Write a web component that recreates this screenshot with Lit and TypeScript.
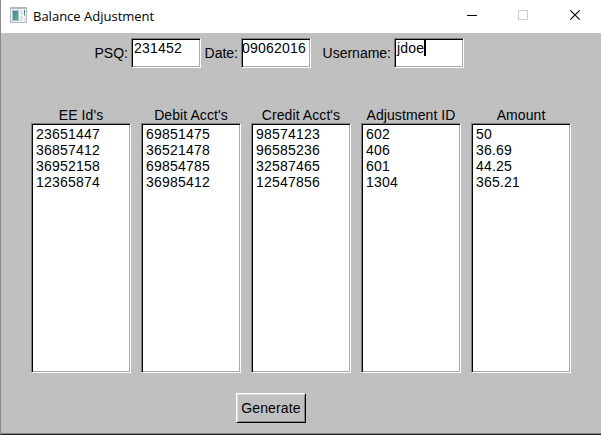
import { LitElement, html, css } from "lit";
import { customElement, property } from "lit/decorators.js";

@customElement("text-field")
class TextField extends LitElement {
  @property() label = "";
  @property() value = "";
  @property({ type: Boolean, reflect: true }) focused = false;
  @property({ type: Boolean, reflect: true }) tight = false;

  static styles = css`
    :host { display: flex; align-items: center; height: 30px; }
    .label { flex: 1; text-align: right; padding-right: 3px; white-space: nowrap; }
    .box {
      box-sizing: border-box; display: flex; width: 70px; height: 30px;
      border: 1px solid; border-color: #808080 #fff #fff #808080;
      box-shadow: inset 1px 1px #000, inset -1px -1px #a9a9a9;
      background: #fff; padding: 1px 0 0 2px; line-height: 16px;
      letter-spacing: .21px; white-space: nowrap;
    }
    :host([tight]) .box { padding-left: 0; }
    .caret { width: 2px; height: 16px; background: #000; }
  `;

  render() {
    return html`
      <span class="label">${this.label}</span>
      <div class="box"><span>${this.value}</span>${this.focused ? html`<i class="caret"></i>` : null}</div>
    `;
  }
}

@customElement("list-column")
class ListColumn extends LitElement {
  @property() heading = "";
  @property({ attribute: false }) items: string[] = [];

  static styles = css`
    :host { display: flex; flex-direction: column; width: 100px; }
    .heading { height: 16px; line-height: 16px; text-align: center; white-space: nowrap; letter-spacing: .08px; }
    .list {
      box-sizing: border-box; height: 250px;
      border: 1px solid; border-color: #808080 #fff #fff #808080;
      box-shadow: inset 1px 1px #000, inset -1px -1px #a9a9a9;
      background: #fff; padding: 2px 4px; line-height: 16px; letter-spacing: .21px;
    }
  `;

  render() {
    return html`
      <div class="heading">${this.heading}</div>
      <div class="list">${this.items.map((item) => html`<div>${item}</div>`)}</div>
    `;
  }
}

@customElement("app-root")
class AppRoot extends LitElement {
  columns = [
    { heading: "EE Id's", items: ["23651447", "36857412", "36952158", "12365874"] },
    { heading: "Debit Acct's", items: ["69851475", "36521478", "69854785", "36985412"] },
    { heading: "Credit Acct's", items: ["98574123", "96585236", "32587465", "12547856"] },
    { heading: "Adjustment ID", items: ["602", "406", "601", "1304"] },
    { heading: "Amount", items: ["50", "36.69", "44.25", "365.21"] },
  ];

  static styles = css`
    :host {
      display: flex; flex-direction: column; box-sizing: border-box;
      width: 601px; height: 435px; overflow: hidden;
      border-left: 1px solid #8c8c8c; border-bottom: 1px solid #262626;
      background: #c0c0c0; color: #000;
      font: 14px "Liberation Sans", Arial, sans-serif;
    }
    .titlebar { display: flex; height: 33px; flex: none; background: #fff; }
    .app-icon { margin: 7px 0 0 9px; flex: none; }
    .title {
      flex: 1; padding-left: 5px; line-height: 33px; white-space: nowrap;
      font-family: "Open Sans", "Noto Sans", sans-serif; font-size: 13px;
    }
    .controls { flex: none; }
    .content { display: flex; flex-direction: column; flex: 1; border-bottom: 1px solid #808080; }
    .fields { display: flex; padding: 5px 0 0 90px; }
    .psq { width: 110px; }
    .date { width: 110px; }
    .user { width: 153px; }
    .columns { display: flex; gap: 10px; padding: 39px 0 0 30px; }
    .generate {
      box-sizing: border-box; width: 70px; height: 30px; margin: 20px 0 0 235px; padding: 0;
      border: 1px solid; border-color: #fff #000 #000 #fff;
      box-shadow: inset 1px 1px #dcdcdc, inset -1px -1px #808080;
      background: #c0c0c0; color: #000; font: inherit; line-height: 28px; letter-spacing: .15px;
    }
  `;

  render() {
    return html`
      <div class="titlebar">
        <svg class="app-icon" width="18" height="16" viewBox="0 0 18 16" shape-rendering="crispEdges">
          <defs>
            <linearGradient id="pane" x2="1" y2="1">
              <stop offset="0" stop-color="#4580b0" /><stop offset="1" stop-color="#60b477" />
            </linearGradient>
            <linearGradient id="bar" x2="0" y2="1">
              <stop offset="0" stop-color="#3d62a8" /><stop offset="1" stop-color="#65bc78" />
            </linearGradient>
          </defs>
          <rect width="17" height="16" fill="#b4b8bd" />
          <rect x="1" y="2" width="15" height="13" fill="#f2f4f5" />
          <rect x="2" y="3" width="7" height="11" fill="#aebfc8" />
          <rect x="3" y="4" width="5" height="9" fill="url(#pane)" />
          <rect x="10" y="3" width="3" height="5" fill="#dfe3e6" />
          <rect x="10" y="9" width="3" height="5" fill="#dfe3e6" />
          <rect x="14" y="3" width="1" height="6" fill="url(#bar)" />
          <rect x="14" y="10" width="1" height="4" fill="#dfe3e6" />
        </svg>
        <span class="title">Balance Adjustment</span>
        <svg class="controls" width="138" height="33" viewBox="0 0 138 33" fill="none">
          <path d="M4 15.5h10" stroke="#000" />
          <path d="M55.5 10.5h9v9h-9z" stroke="#ccc" />
          <path d="M107.3 10.3l9.4 9.4M116.7 10.3l-9.4 9.4" stroke="#000" stroke-width="1.1" />
        </svg>
      </div>
      <div class="content">
        <div class="fields">
          <text-field class="psq" label="PSQ:" value="231452"></text-field>
          <text-field class="date" label="Date:" value="09062016" tight></text-field>
          <text-field class="user" label="Username:" value="jdoe" focused></text-field>
        </div>
        <div class="columns">
          ${this.columns.map((c) => html`<list-column .heading=${c.heading} .items=${c.items}></list-column>`)}
        </div>
        <button class="generate">Generate</button>
      </div>
    `;
  }
}
